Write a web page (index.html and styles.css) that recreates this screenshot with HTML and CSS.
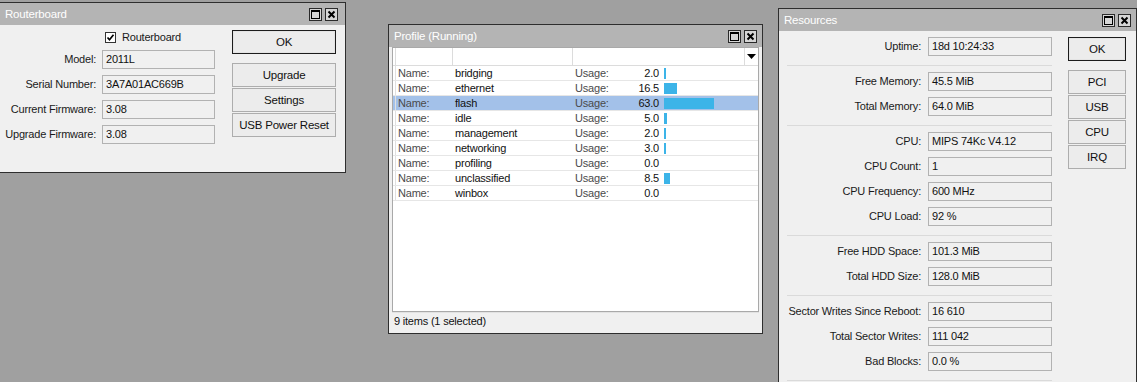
FILE: index.html
```html
<!DOCTYPE html>
<html lang="en">
<head>
  <meta charset="UTF-8">
  <title>Winbox</title>
  <link rel="stylesheet" href="styles.css">
</head>
<body>

  <!-- Routerboard window -->
  <div class="window win-rb">
    <div class="titlebar">
      <span>Routerboard</span>
      <div class="title-btns">
        <span class="tbtn"><svg width="11" height="11" viewBox="0 0 11 11"><rect x="1.5" y="1.5" width="8" height="8" fill="none" stroke="#000"/><line x1="1" y1="2.5" x2="10" y2="2.5" stroke="#000"/></svg></span>
        <span class="tbtn"><svg width="11" height="11" viewBox="0 0 11 11"><path d="M2.5 2.5l6 6M8.5 2.5l-6 6" stroke="#000" stroke-width="2"/></svg></span>
      </div>
    </div>
    <div class="win-body rb-body">
      <div class="rb-form">
        <span></span>
        <label class="check">
          <span class="checkbox"><svg width="9" height="9" viewBox="0 0 9 9"><path d="M1.5 4.5l2 2.2 4-5" fill="none" stroke="#000" stroke-width="1.7"/></svg></span>
          Routerboard
        </label>
        <span class="lbl">Model:</span><span class="field">2011L</span>
        <span class="lbl">Serial Number:</span><span class="field">3A7A01AC669B</span>
        <span class="lbl">Current Firmware:</span><span class="field">3.08</span>
        <span class="lbl">Upgrade Firmware:</span><span class="field">3.08</span>
      </div>
      <div class="btn-col rb-btns">
        <button class="btn default">OK</button>
        <button class="btn">Upgrade</button>
        <button class="btn">Settings</button>
        <button class="btn">USB Power Reset</button>
      </div>
    </div>
  </div>

  <!-- Profile window -->
  <div class="window win-profile">
    <div class="titlebar">
      <span>Profile (Running)</span>
      <div class="title-btns">
        <span class="tbtn"><svg width="11" height="11" viewBox="0 0 11 11"><rect x="1.5" y="1.5" width="8" height="8" fill="none" stroke="#000"/><line x1="1" y1="2.5" x2="10" y2="2.5" stroke="#000"/></svg></span>
        <span class="tbtn"><svg width="11" height="11" viewBox="0 0 11 11"><path d="M2.5 2.5l6 6M8.5 2.5l-6 6" stroke="#000" stroke-width="2"/></svg></span>
      </div>
    </div>
    <div class="profile-body">
      <div class="list">
        <div class="list-head">
          <span class="h0"></span>
          <span class="h1"></span>
          <span class="h2"></span>
          <span class="h3"></span>
          <span class="h4"><svg width="9" height="5" viewBox="0 0 9 5"><polygon points="0,0 9,0 4.5,5" fill="#000"/></svg></span>
        </div>
        <div class="row"><span class="c0"></span><span class="key">Name:</span><span>bridging</span><span class="key">Usage:</span><span class="num">2.0</span><span class="bar-cell"><i class="bar" style="width:2px"></i></span></div>
        <div class="row"><span class="c0"></span><span class="key">Name:</span><span>ethernet</span><span class="key">Usage:</span><span class="num">16.5</span><span class="bar-cell"><i class="bar" style="width:13px"></i></span></div>
        <div class="row selected"><span class="c0"></span><span class="key">Name:</span><span>flash</span><span class="key">Usage:</span><span class="num">63.0</span><span class="bar-cell"><i class="bar" style="width:50px"></i></span></div>
        <div class="row"><span class="c0"></span><span class="key">Name:</span><span>idle</span><span class="key">Usage:</span><span class="num">5.0</span><span class="bar-cell"><i class="bar" style="width:3px"></i></span></div>
        <div class="row"><span class="c0"></span><span class="key">Name:</span><span>management</span><span class="key">Usage:</span><span class="num">2.0</span><span class="bar-cell"><i class="bar" style="width:2px"></i></span></div>
        <div class="row"><span class="c0"></span><span class="key">Name:</span><span>networking</span><span class="key">Usage:</span><span class="num">3.0</span><span class="bar-cell"><i class="bar" style="width:2px"></i></span></div>
        <div class="row"><span class="c0"></span><span class="key">Name:</span><span>profiling</span><span class="key">Usage:</span><span class="num">0.0</span><span class="bar-cell"></span></div>
        <div class="row"><span class="c0"></span><span class="key">Name:</span><span>unclassified</span><span class="key">Usage:</span><span class="num">8.5</span><span class="bar-cell"><i class="bar" style="width:6px"></i></span></div>
        <div class="row"><span class="c0"></span><span class="key">Name:</span><span>winbox</span><span class="key">Usage:</span><span class="num">0.0</span><span class="bar-cell"></span></div>
      </div>
      <div class="status">9 items (1 selected)</div>
    </div>
  </div>

  <!-- Resources window -->
  <div class="window win-res">
    <div class="titlebar">
      <span>Resources</span>
      <div class="title-btns">
        <span class="tbtn"><svg width="11" height="11" viewBox="0 0 11 11"><rect x="1.5" y="1.5" width="8" height="8" fill="none" stroke="#000"/><line x1="1" y1="2.5" x2="10" y2="2.5" stroke="#000"/></svg></span>
        <span class="tbtn"><svg width="11" height="11" viewBox="0 0 11 11"><path d="M2.5 2.5l6 6M8.5 2.5l-6 6" stroke="#000" stroke-width="2"/></svg></span>
      </div>
    </div>
    <div class="win-body res-body">
      <div class="res-form">
        <div class="res-row"><span class="lbl">Uptime:</span><span class="field">18d 10:24:33</span></div>
        <div class="sep"></div>
        <div class="res-row"><span class="lbl">Free Memory:</span><span class="field">45.5 MiB</span></div>
        <div class="res-row"><span class="lbl">Total Memory:</span><span class="field">64.0 MiB</span></div>
        <div class="sep"></div>
        <div class="res-row"><span class="lbl">CPU:</span><span class="field">MIPS 74Kc V4.12</span></div>
        <div class="res-row"><span class="lbl">CPU Count:</span><span class="field">1</span></div>
        <div class="res-row"><span class="lbl">CPU Frequency:</span><span class="field">600 MHz</span></div>
        <div class="res-row"><span class="lbl">CPU Load:</span><span class="field">92 %</span></div>
        <div class="sep"></div>
        <div class="res-row"><span class="lbl">Free HDD Space:</span><span class="field">101.3 MiB</span></div>
        <div class="res-row"><span class="lbl">Total HDD Size:</span><span class="field">128.0 MiB</span></div>
        <div class="sep"></div>
        <div class="res-row"><span class="lbl">Sector Writes Since Reboot:</span><span class="field">16 610</span></div>
        <div class="res-row"><span class="lbl">Total Sector Writes:</span><span class="field">111 042</span></div>
        <div class="res-row"><span class="lbl">Bad Blocks:</span><span class="field">0.0 %</span></div>
        <div class="sep"></div>
      </div>
      <div class="btn-col res-btns">
        <button class="btn default">OK</button>
        <button class="btn">PCI</button>
        <button class="btn">USB</button>
        <button class="btn">CPU</button>
        <button class="btn">IRQ</button>
      </div>
    </div>
  </div>

</body>
</html>
```

FILE: styles.css
```css
body {
  margin: 0;
  width: 1137px;
  height: 382px;
  overflow: hidden;
  position: relative;
  background-color: #a0a0a0;
  font-family: 'Liberation Sans', Arial, sans-serif;
  font-size: 11px;
  letter-spacing: -0.2px;
  color: #1a1a1a;
}

/* windows sit on the desktop at their own spots */
.window {
  position: absolute;
  box-sizing: border-box;
  border: 1px solid #2e2e2e;
  background-color: #f0f0f0;
  display: flex;
  flex-direction: column;
}

.win-rb {
  left: -6px;
  top: 2px;
  width: 352px;
  height: 171px;
}

.win-profile {
  left: 388px;
  top: 24px;
  width: 375px;
  height: 310px;
}

.win-res {
  left: 778px;
  top: 8px;
  width: 359px;
  height: 390px;
}

.titlebar {
  height: 22px;
  flex: none;
  background-color: #b4b4b4;
  color: #fff;
  font-size: 11.5px;
  display: flex;
  align-items: center;
  justify-content: space-between;
  padding: 0 5px 0 5px;
}

.win-rb .titlebar {
  padding-left: 10px;
  padding-right: 7px;
}

.title-btns {
  display: flex;
  gap: 3px;
}

.tbtn {
  width: 13px;
  height: 13px;
  box-sizing: border-box;
  border: 1px solid #2a2a2a;
  background-color: #d6d6d6;
  display: flex;
  align-items: center;
  justify-content: center;
}

.win-body {
  display: flex;
  flex: 1;
}

/* fields and labels */
.lbl {
  text-align: right;
  line-height: 19px;
  white-space: nowrap;
}

.field {
  box-sizing: border-box;
  height: 19px;
  line-height: 17px;
  border: 1px solid #b2b2b2;
  background-color: #f0f0f0;
  padding-left: 3px;
  color: #111;
}

/* buttons */
.btn-col {
  display: flex;
  flex-direction: column;
  gap: 1px;
}

.btn {
  height: 24px;
  box-sizing: border-box;
  border: 1px solid #adadad;
  background-color: #ececec;
  font-family: inherit;
  font-size: 11.5px;
  letter-spacing: -0.2px;
  color: #111;
  padding: 0;
  cursor: pointer;
}

.btn.default {
  border: 1px solid #1c1c1c;
  box-shadow: inset 0 0 0 1px #e4e4e4;
  margin-bottom: 8px;
}

/* routerboard */
.rb-body {
  padding: 5px 0 0 4px;
}

.rb-form {
  display: grid;
  grid-template-columns: 97px 113px;
  grid-template-rows: 14px repeat(4, 19px);
  column-gap: 6px;
  row-gap: 6px;
}

.check {
  display: flex;
  align-items: center;
  gap: 6px;
  padding-left: 3px;
}

.checkbox {
  width: 11px;
  height: 11px;
  box-sizing: border-box;
  border: 1px solid #333;
  background-color: #fff;
  display: flex;
  align-items: center;
  justify-content: center;
}

.rb-btns {
  width: 104px;
  margin-left: 17px;
}

/* profile list */
.profile-body {
  flex: 1;
  display: flex;
  flex-direction: column;
  padding: 0 3px;
}

.list {
  flex: 1;
  background-color: #fff;
  border: 1px solid #a9a9a9;
}

.list-head {
  display: grid;
  grid-template-columns: 3px 57px 120px 172px 1fr;
  height: 17px;
  border-bottom: 1px solid #dcdcdc;
}

.list-head span {
  border-right: 1px solid #dcdcdc;
}

.list-head .h4 {
  border-right: none;
  display: flex;
  align-items: center;
  justify-content: center;
}

.row {
  display: grid;
  grid-template-columns: 3px 57px 120px 49px 38px 1fr;
  height: 14px;
  line-height: 14px;
  border-bottom: 1px solid #e6e6e6;
  color: #111;
}

.row span {
  padding-left: 2px;
  white-space: nowrap;
}

.row .c0 {
  padding: 0;
  border-right: 1px solid #e0e0e0;
}

.row .key {
  color: #4a4a4a;
}

.row .num {
  text-align: right;
  padding: 0 1px 0 0;
}

.row .bar-cell {
  padding-left: 4px;
  display: flex;
  align-items: center;
}

.bar {
  display: block;
  height: 11px;
  background-color: #3cb4e8;
}

.row.selected {
  background-color: #a3c1e9;
}

.status {
  height: 20px;
  line-height: 16px;
  padding-left: 2px;
  color: #111;
  border-top: 1px solid #e2e2e2;
}

/* resources */
.res-body {
  padding-top: 6px;
}

.res-form {
  display: flex;
  flex-direction: column;
  gap: 6px;
}

.res-row {
  display: grid;
  grid-template-columns: 142px 124px;
  column-gap: 7px;
  height: 19px;
}

.sep {
  height: 1px;
  margin: 3px 0 0 8px;
  background-color: #dadada;
}

.res-btns {
  width: 58px;
  margin-left: 16px;
}
```
